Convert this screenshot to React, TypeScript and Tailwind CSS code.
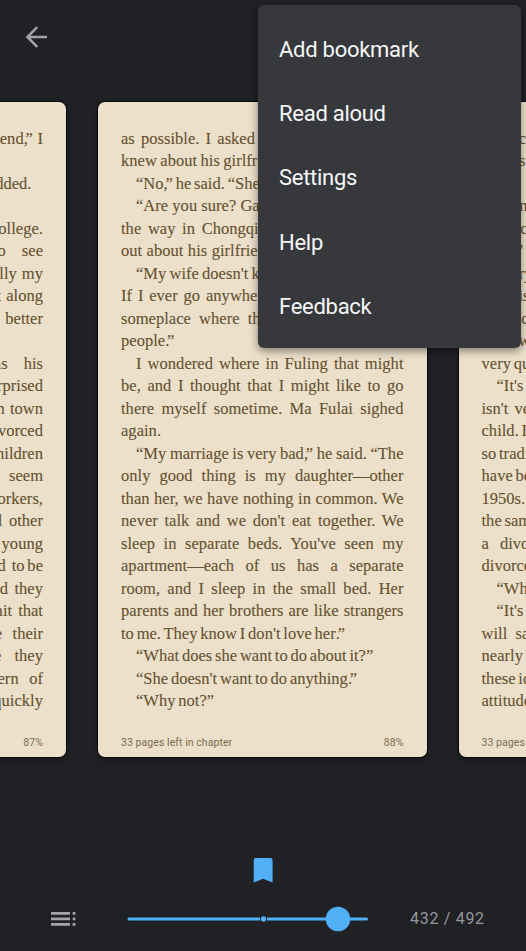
type Line = { t: string; i?: boolean; w?: number; end?: boolean };
type Tail = { a?: string; b?: string; gap?: number; inset?: number };

const center: Line[] = [
  { t: "as possible. I asked", w: 134 },
  { t: "knew about his girlfri", w: 141 },
  { t: "“No,” he said. “She", i: true, w: 118.5 },
  { t: "“Are you sure? Gan", i: true, w: 132 },
  { t: "the way in Chongqin", w: 146 },
  { t: "out about his girlfrien", w: 145 },
  { t: "“My wife doesn't kn", i: true, w: 132 },
  { t: "If I ever go anywher", w: 142 },
  { t: "someplace where the", w: 147 },
  { t: "people.”", w: 51 },
  { t: "I wondered where in Fuling that might", i: true },
  { t: "be, and I thought that I might like to go" },
  { t: "there myself sometime. Ma Fulai sighed" },
  { t: "again.", w: 39 },
  { t: "“My marriage is very bad,” he said. “The", i: true },
  { t: "only good thing is my daughter—other" },
  { t: "than her, we have nothing in common. We" },
  { t: "never talk and we don't eat together. We" },
  { t: "sleep in separate beds. You've seen my" },
  { t: "apartment—each of us has a separate" },
  { t: "room, and I sleep in the small bed. Her" },
  { t: "parents and her brothers are like strangers" },
  { t: "to me. They know I don't love her.”", w: 222 },
  { t: "“What does she want to do about it?”", i: true, w: 237 },
  { t: "“She doesn't want to do anything.”", i: true, w: 220 },
  { t: "“Why not?”", i: true, w: 75 },
];

const left: Tail[] = [
  { a: "friend,”", b: "I", gap: 4.5 },
  {},
  { b: "nodded.", inset: 11.5 },
  {},
  { b: "college." },
  { a: "to", b: "see", gap: 16 },
  { a: "really", b: "my", gap: 5 },
  { a: "it", b: "along", gap: 5 },
  { b: "better" },
  {},
  { a: "was", b: "his", gap: 16 },
  { b: "surprised" },
  { a: "in", b: "town", gap: 5 },
  { b: "divorced" },
  { b: "children" },
  { b: "seem" },
  { b: "workers," },
  { a: "and", b: "other", gap: 7 },
  { b: "young" },
  { a: "had", b: "to be", gap: 6 },
  { a: "and", b: "they", gap: 6.5 },
  { a: "admit", b: "that", gap: 6 },
  { a: "are", b: "their", gap: 10.5 },
  { a: "are", b: "they", gap: 13 },
  { a: "pattern", b: "of", gap: 10.5 },
  { b: "quickly" },
];

const right: Line[] = [
  { t: "c", w: 44.5, end: true },
  { t: "s", w: 44, end: true },
  { t: "" },
  { t: "n", w: 46, end: true },
  { t: "c", w: 46, end: true },
  { t: "’", w: 42.5, end: true },
  { t: "ry", w: 51, end: true },
  { t: "is", w: 48, end: true },
  { t: "c", w: 47, end: true },
  { t: "w", w: 49, end: true },
  { t: "very quick" },
  { t: "“It's hard", i: true },
  { t: "isn't\u2009 very" },
  { t: "child. If" },
  { t: "so tradit" },
  { t: "have been" },
  { t: "1950s." },
  { t: "the same" },
  { t: "a\u2002 divorce" },
  { t: "divorced" },
  { t: "“What", i: true },
  { t: "“It's", i: true },
  { t: "will\u2002say" },
  { t: "nearly" },
  { t: "these ideas" },
  { t: "attitude" },
];

// Tucks a closing quote over the comma or full stop before it.
function Kerned({ t }: { t: string }) {
  return (
    <>
      {t.split(/([,.]”)/).map((part, k) =>
        /^[,.]”$/.test(part) ? (
          <span key={k}>
            <span className="tracking-[-2.2px]">{part[0]}</span>
            {part[1]}
          </span>
        ) : (
          part
        ),
      )}
    </>
  );
}

function Row({ line, justify }: { line: Line; justify: boolean }) {
  return (
    <div
      className={`h-[22.5px] whitespace-nowrap ${line.i ? "ml-[15px]" : ""} ${justify ? "[text-align-last:justify]" : ""} ${line.end ? "text-right" : ""}`}
      style={line.w ? { width: line.w } : undefined}
    >
      <Kerned t={line.t} />
    </div>
  );
}

const sheet =
  "flex h-[655.5px] shrink-0 flex-col overflow-hidden rounded-[7px] bg-[#ece0ca] pt-[26px] shadow-[0_0_0_1px_#08090b,0_3px_6px_rgba(0,0,0,.35)]";
const prose =
  "font-['Liberation_Serif',serif] text-[16.5px] leading-[22.5px] tracking-[0.03px] [word-spacing:-1.4px] text-[#65512f] [-webkit-text-stroke:0.1px_#65512f]";
const foot =
  "mt-auto flex h-[29px] justify-between whitespace-nowrap font-[Roboto,sans-serif] text-[10.5px] leading-[30.5px] tracking-[0.06px] text-[#7b6b50]";

export default function App() {
  return (
    <div className="relative flex h-[951px] w-[526px] flex-col overflow-hidden bg-[#202125] font-[Roboto,sans-serif]">
      <header className="h-[101.5px] shrink-0 pt-[25px] pl-[24px]">
        <svg width="25" height="24" viewBox="0 0 25 24" fill="none" stroke="#a2a3a6" strokeWidth="2.5">
          <path d="M23 12H3.5M13.2 2.2L3.4 12l9.8 9.8" />
        </svg>
      </header>

      <main className="flex w-[526px] gap-[32px]">
        <section className={`${sheet} w-[66px] rounded-l-none pr-[23px]`}>
          <div className={prose}>
            {left.map((l, k) => (
              <div
                key={k}
                className="flex h-[22.5px] justify-end whitespace-nowrap"
                style={{ gap: l.gap, paddingRight: l.inset }}
              >
                {l.a && <span><Kerned t={l.a} /></span>}
                {l.b && <span>{l.b}</span>}
              </div>
            ))}
          </div>
          <div className={`${foot} self-end`}>87%</div>
        </section>
        <section className={`${sheet} w-[328.5px] pr-[23px] pl-[23px]`}>
          <div className={prose}>
            {center.map((l, k) => <Row key={k} line={l} justify />)}
          </div>
          <div className={foot}><span>33 pages left in chapter</span><span>88%</span></div>
        </section>
        <section className={`${sheet} w-[328px] pl-[23px]`}>
          <div className={prose}>
            {right.map((l, k) => <Row key={k} line={l} justify={false} />)}
          </div>
          <div className={foot}><span>33 pages left in chapter</span></div>
        </section>
      </main>

      <footer className="flex flex-1 flex-col">
        <div className="flex h-[126px] items-end justify-center">
          <svg width="20" height="25" viewBox="0 0 20 25" fill="#50aff5">
            <path d="M2.900 0h14.500a2.200 2.200 0 0 1 2.200 2.200V24.500L10.100 20.700.700 24.500V2.200A2.200 2.200 0 0 1 2.900 0z" />
          </svg>
        </div>
        <div className="mt-[9.5px] flex h-[52px] items-center">
          <svg className="ml-[51px]" width="25" height="16" viewBox="0 0 25 16" fill="#a3a4a7">
            <path d="M0 1h19v2.700H0zM0 6.600h19v2.700H0zM0 12h19v2.700H0zM21.700 1h2.700v2.700h-2.700zM21.700 6.600h2.700v2.700h-2.700zM21.700 12h2.700v2.700h-2.700z" />
          </svg>
          <svg className="ml-[51px]" width="242" height="26" viewBox="0 0 242 26" fill="#50aff5">
            <path d="M2 11.500h131v3H2a1.500 1.500 0 0 1 0-3zM140 11.500h99.500a1.500 1.500 0 0 1 0 3H140z" />
            <circle cx="136.500" cy="13" r="2.700" />
            <circle cx="211" cy="13" r="12.300" />
          </svg>
          <span className="ml-[41px] whitespace-nowrap text-[16px] tracking-[0.7px] text-[#97989c]">432 / 492</span>
        </div>
      </footer>

      <nav className="absolute top-[5px] left-[257.5px] flex h-[343px] w-[263px] flex-col rounded-[6px] bg-[#37383c] pt-[12.5px] pl-[21.5px] text-[22px] tracking-[-0.27px] text-[#f5f6f8] shadow-[0_3px_9px_rgba(0,0,0,.45)]">
        {["Add bookmark", "Read aloud", "Settings", "Help", "Feedback"].map((t) => (
          <div key={t} className="h-[64.35px] leading-[64.35px]">{t}</div>
        ))}
      </nav>
    </div>
  );
}
